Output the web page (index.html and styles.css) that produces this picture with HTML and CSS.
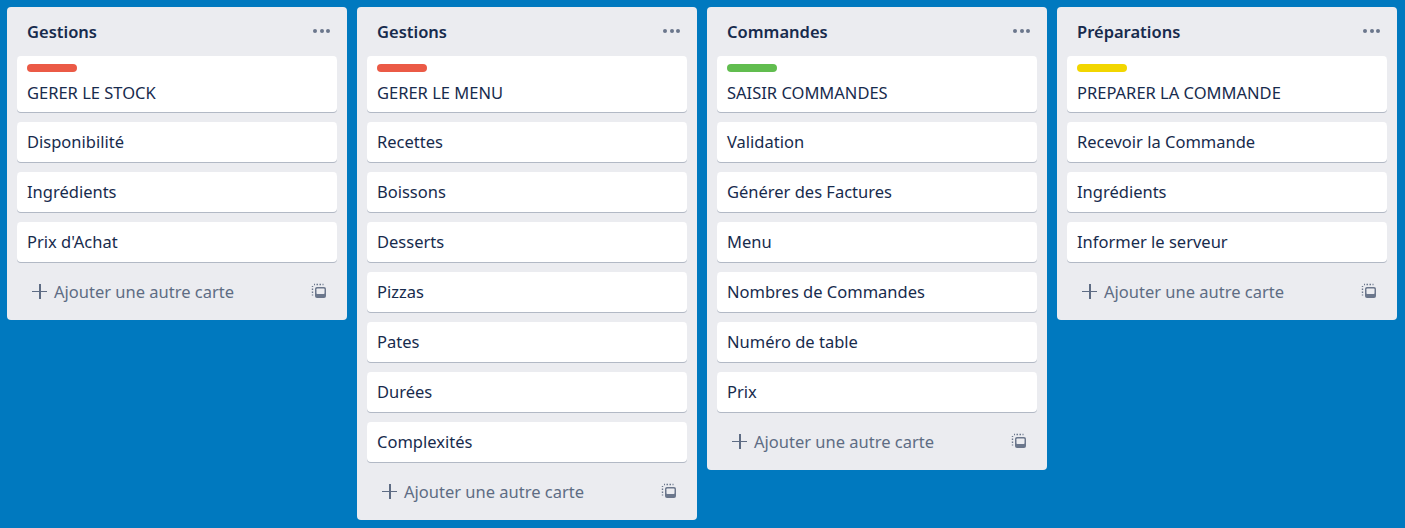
FILE: index.html
```html
<!DOCTYPE html>
<html lang="fr">
<head>
<meta charset="utf-8">
<title>Tableau</title>
<link rel="stylesheet" href="styles.css">
</head>
<body>
<div class="board">
  <section class="list">
    <header class="list-header"><h2 class="list-title">Gestions</h2><span class="list-menu"><i></i><i></i><i></i></span></header>
    <div class="cards">
      <div class="card card-labeled"><span class="label label-red"></span><div class="card-text">GERER LE STOCK</div></div>
      <div class="card"><div class="card-text">Disponibilité</div></div>
      <div class="card"><div class="card-text">Ingrédients</div></div>
      <div class="card"><div class="card-text">Prix d'Achat</div></div>
    </div>
    <footer class="composer"><span class="plus"></span><span class="composer-text">Ajouter une autre carte</span><svg class="tpl" viewBox="0 0 16 16" width="16" height="16"><path d="M1.5 3v1M1.5 5.5v1.5M1.5 8.5v1.5M1.5 11.5v1M3 1.5h1M5.5 1.5h1.5M8.5 1.5h1.5M11.5 1.5h1" stroke="#6b778c" stroke-width="1.4" fill="none"/><rect x="4" y="4" width="11" height="11" rx="2" fill="#6b778c"/><rect x="5.5" y="5.5" width="8" height="5.5" rx="0.8" fill="#ebecf0"/></svg></footer>
  </section>
  <section class="list">
    <header class="list-header"><h2 class="list-title">Gestions</h2><span class="list-menu"><i></i><i></i><i></i></span></header>
    <div class="cards">
      <div class="card card-labeled"><span class="label label-red"></span><div class="card-text">GERER LE MENU</div></div>
      <div class="card"><div class="card-text">Recettes</div></div>
      <div class="card"><div class="card-text">Boissons</div></div>
      <div class="card"><div class="card-text">Desserts</div></div>
      <div class="card"><div class="card-text">Pizzas</div></div>
      <div class="card"><div class="card-text">Pates</div></div>
      <div class="card"><div class="card-text">Durées</div></div>
      <div class="card"><div class="card-text">Complexités</div></div>
    </div>
    <footer class="composer"><span class="plus"></span><span class="composer-text">Ajouter une autre carte</span><svg class="tpl" viewBox="0 0 16 16" width="16" height="16"><path d="M1.5 3v1M1.5 5.5v1.5M1.5 8.5v1.5M1.5 11.5v1M3 1.5h1M5.5 1.5h1.5M8.5 1.5h1.5M11.5 1.5h1" stroke="#6b778c" stroke-width="1.4" fill="none"/><rect x="4" y="4" width="11" height="11" rx="2" fill="#6b778c"/><rect x="5.5" y="5.5" width="8" height="5.5" rx="0.8" fill="#ebecf0"/></svg></footer>
  </section>
  <section class="list">
    <header class="list-header"><h2 class="list-title">Commandes</h2><span class="list-menu"><i></i><i></i><i></i></span></header>
    <div class="cards">
      <div class="card card-labeled"><span class="label label-green"></span><div class="card-text">SAISIR COMMANDES</div></div>
      <div class="card"><div class="card-text">Validation</div></div>
      <div class="card"><div class="card-text">Générer des Factures</div></div>
      <div class="card"><div class="card-text">Menu</div></div>
      <div class="card"><div class="card-text">Nombres de Commandes</div></div>
      <div class="card"><div class="card-text">Numéro de table</div></div>
      <div class="card"><div class="card-text">Prix</div></div>
    </div>
    <footer class="composer"><span class="plus"></span><span class="composer-text">Ajouter une autre carte</span><svg class="tpl" viewBox="0 0 16 16" width="16" height="16"><path d="M1.5 3v1M1.5 5.5v1.5M1.5 8.5v1.5M1.5 11.5v1M3 1.5h1M5.5 1.5h1.5M8.5 1.5h1.5M11.5 1.5h1" stroke="#6b778c" stroke-width="1.4" fill="none"/><rect x="4" y="4" width="11" height="11" rx="2" fill="#6b778c"/><rect x="5.5" y="5.5" width="8" height="5.5" rx="0.8" fill="#ebecf0"/></svg></footer>
  </section>
  <section class="list">
    <header class="list-header"><h2 class="list-title">Préparations</h2><span class="list-menu"><i></i><i></i><i></i></span></header>
    <div class="cards">
      <div class="card card-labeled"><span class="label label-yellow"></span><div class="card-text">PREPARER LA COMMANDE</div></div>
      <div class="card"><div class="card-text">Recevoir la Commande</div></div>
      <div class="card"><div class="card-text">Ingrédients</div></div>
      <div class="card"><div class="card-text">Informer le serveur</div></div>
    </div>
    <footer class="composer"><span class="plus"></span><span class="composer-text">Ajouter une autre carte</span><svg class="tpl" viewBox="0 0 16 16" width="16" height="16"><path d="M1.5 3v1M1.5 5.5v1.5M1.5 8.5v1.5M1.5 11.5v1M3 1.5h1M5.5 1.5h1.5M8.5 1.5h1.5M11.5 1.5h1" stroke="#6b778c" stroke-width="1.4" fill="none"/><rect x="4" y="4" width="11" height="11" rx="2" fill="#6b778c"/><rect x="5.5" y="5.5" width="8" height="5.5" rx="0.8" fill="#ebecf0"/></svg></footer>
  </section>
</div>
</body>
</html>
```
FILE: styles.css
```css
html, body {
  margin: 0;
  padding: 0;
  height: 100%;
}
body {
  background: #0079bf;
  font-family: "Noto Sans", "Open Sans", sans-serif;
  color: #172b4d;
  font-size: 16.5px;
}
.board {
  display: flex;
  align-items: flex-start;
  gap: 10px;
  padding: 7px 0 0 7px;
}
.list {
  width: 340px;
  flex: none;
  background: #ebecf0;
  border-radius: 4px;
  display: flex;
  flex-direction: column;
  padding-bottom: 9px;
}
.list-header {
  display: flex;
  align-items: center;
  justify-content: space-between;
  padding: 12px 17px 12px 20px;
  height: 25px;
}
.list-title {
  margin: 0;
  font-size: 16.5px;
  font-weight: 600;
  line-height: 25px;
  color: #172b4d;
}
.list-menu {
  display: flex;
  gap: 2.5px;
  margin-top: -1px;
}
.list-menu i {
  display: block;
  width: 4px;
  height: 4px;
  border-radius: 50%;
  background: #6b778c;
}
.cards {
  padding: 0 10px;
  display: flex;
  flex-direction: column;
  gap: 10px;
}
.card {
  background: #fff;
  border-radius: 4px;
  box-shadow: 0 1px 0 rgba(9, 30, 66, 0.25);
  padding: 7.5px 10px;
}
.card-labeled {
  padding: 8px 10px 6.5px;
}
.card-text {
  line-height: 25px;
  white-space: nowrap;
}
.label {
  display: block;
  width: 50px;
  height: 8px;
  border-radius: 4px;
  margin-bottom: 8px;
}
.label-red { background: #eb5a46; }
.label-green { background: #61bd4f; }
.label-yellow { background: #f2d600; }
.composer {
  display: flex;
  align-items: center;
  margin: 10px 10px 0;
  padding: 7px 10px 7px 15px;
  color: #5e6c84;
  line-height: 25px;
}
.plus {
  position: relative;
  width: 15px;
  height: 15px;
  margin-right: 7px;
  flex: none;
}
.plus::before, .plus::after {
  content: "";
  position: absolute;
  background: #5e6c84;
}
.plus::before {
  left: 0;
  right: 0;
  top: 7px;
  height: 1.5px;
}
.plus::after {
  top: 0;
  bottom: 0;
  left: 7px;
  width: 1.5px;
}
.composer-text {
  flex: 1;
}
.tpl {
  flex: none;
}
```
